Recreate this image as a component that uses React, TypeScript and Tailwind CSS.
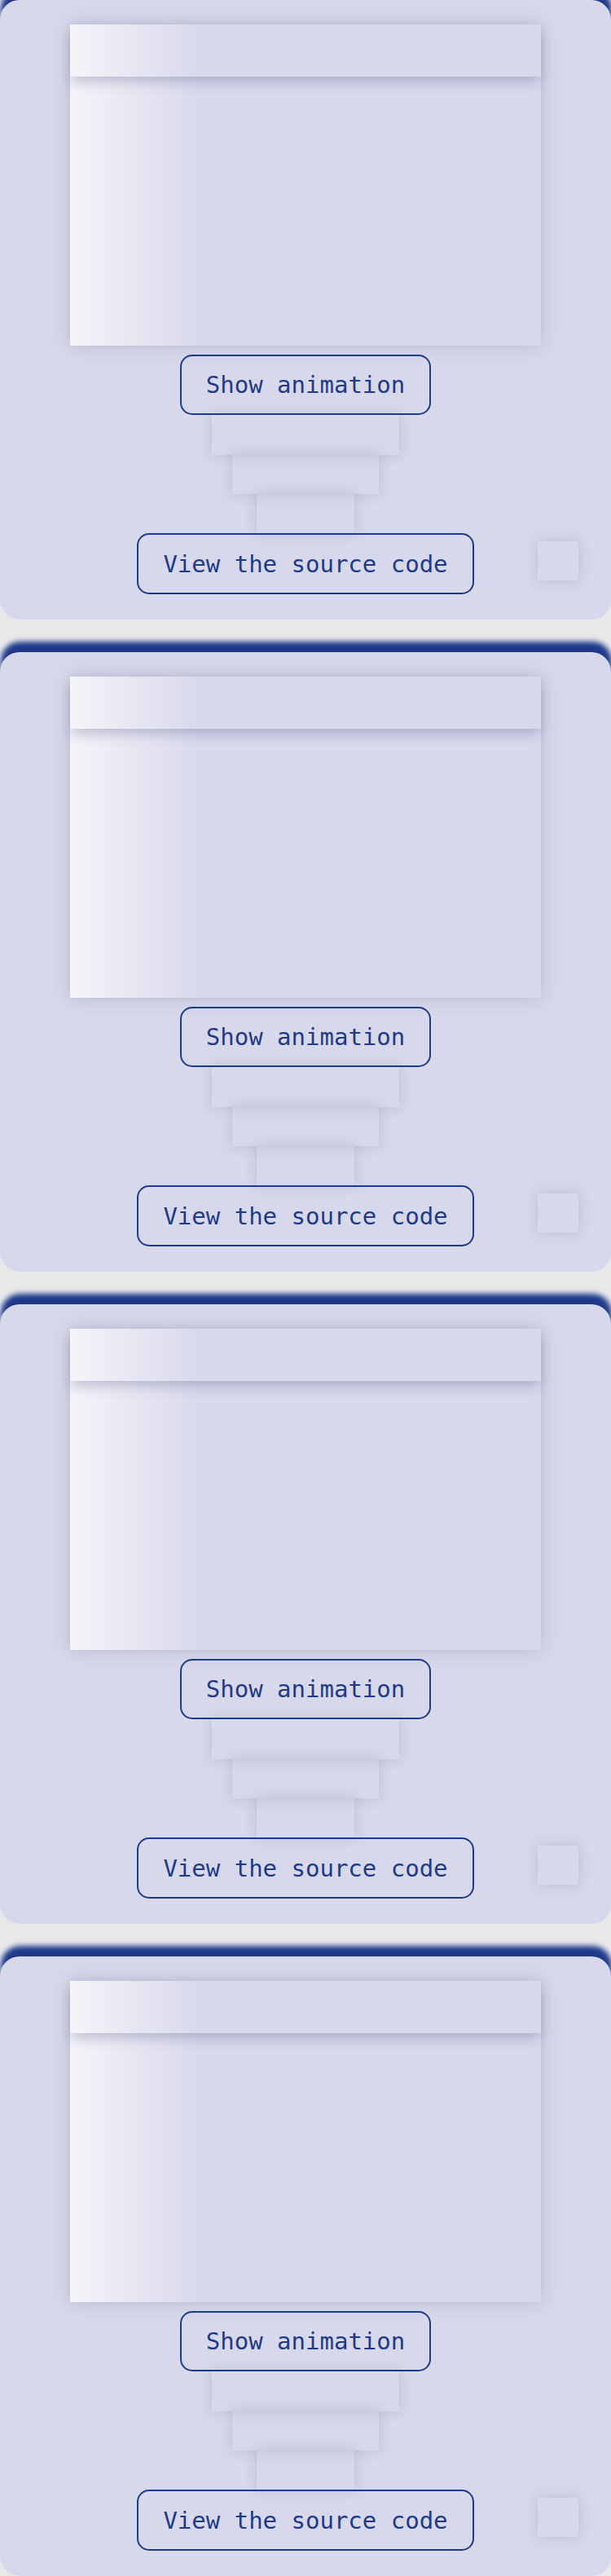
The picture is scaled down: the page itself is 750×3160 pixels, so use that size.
import React from "react";

const mono = { fontFamily: '"DejaVu Sans Mono", "Liberation Mono", monospace' };

function Card() {
  return (
    <div className="relative w-full h-[760px] rounded-[24px] bg-[#d8d8ec] shadow-[1px_-13px_6px_#1e3a8a] flex flex-col items-center pt-[30px]">
      <div className="w-[578px] h-[394px] bg-[linear-gradient(to_right,#f4f4f9,#d8d8ec_28%)] shadow-[0_0_20px_rgba(60,60,110,0.22)]">
        <div className="h-[64px] shadow-[0_8px_14px_-2px_rgba(60,60,110,0.28)]" />
      </div>
      <button
        style={mono}
        className="mt-[11px] h-[74px] px-[30px] border-2 border-[#1e3a8a] rounded-[15px] text-[29px] leading-[34px] text-[#1e3a8a] flex items-center"
      >
        Show animation
      </button>
      <div className="w-[230px] h-[49px] shadow-[0_0_16px_rgba(60,60,110,0.2)]" />
      <div className="w-[180px] h-[48px] shadow-[0_0_16px_rgba(60,60,110,0.2)]" />
      <div className="w-[120px] h-[48px] shadow-[0_0_16px_rgba(60,60,110,0.2)]" />
      <div className="w-full grid grid-cols-[1fr_auto_1fr]">
        <div />
        <button
          style={mono}
          className="h-[75px] px-[30px] border-2 border-[#1e3a8a] rounded-[15px] text-[29px] leading-[34px] text-[#1e3a8a] flex items-center"
        >
          View the source code
        </button>
        <div className="flex justify-end items-start pr-[40px] pt-[10px]">
          <div className="w-[50px] h-[48px] shadow-[0_0_16px_rgba(60,60,110,0.2)]" />
        </div>
      </div>
    </div>
  );
}

export default function App() {
  return (
    <div className="w-[750px] min-h-[3160px] bg-[#e8e8ea] flex flex-col gap-[40px] overflow-hidden">
      <Card />
      <Card />
      <Card />
      <Card />
    </div>
  );
}
